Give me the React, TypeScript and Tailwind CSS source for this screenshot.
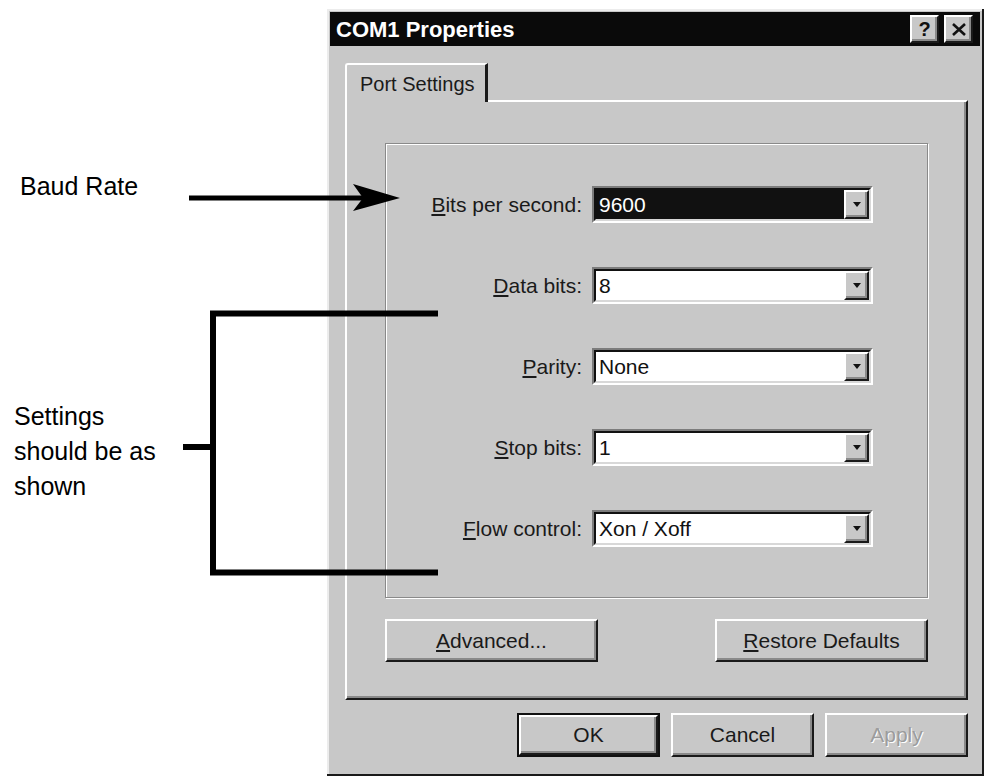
import React from 'react';

const raised =
  'border-2 border-t-white border-l-white border-r-[#1a1a1a] border-b-[#1a1a1a] shadow-[inset_-2px_-2px_0_#8a8a8a]';

function Mnemonic({ text, index = 0 }: { text: string; index?: number }) {
  return (
    <>
      {text.slice(0, index)}
      <span className="underline underline-offset-2">{text[index]}</span>
      {text.slice(index + 1)}
    </>
  );
}

function Combo({ label, value, selected }: { label: string; value: string; selected?: boolean }) {
  return (
    <div className="flex items-center">
      <div className="w-[206px] pr-[10px] text-right text-[21px] text-[#1a1a1a]">
        <Mnemonic text={label} />
      </div>
      <div className="h-[37px] w-[281px] border-2 border-t-[#7c7c7c] border-l-[#7c7c7c] border-r-white border-b-white">
        <div className="flex h-full border-2 border-t-[#111] border-l-[#111] border-r-[#d8d8d8] border-b-[#d8d8d8]">
          <div
            className={
              selected
                ? 'flex flex-1 items-center bg-[#111] pl-[3px] text-[21px] text-white'
                : 'flex flex-1 items-center bg-white pl-[3px] text-[21px] text-[#111]'
            }
          >
            {value}
          </div>
          <div className={`flex w-[25px] items-center justify-center bg-[#c8c8c8] ${raised}`}>
            <svg width="8" height="5" viewBox="0 0 8 5">
              <polygon points="0,0 8,0 4,5" fill="#111" />
            </svg>
          </div>
        </div>
      </div>
    </div>
  );
}

function Button({ children, isDefault, disabled }: { children: React.ReactNode; isDefault?: boolean; disabled?: boolean }) {
  return (
    <div className={isDefault ? 'h-[44px] w-[143px] border-2 border-[#111]' : 'h-[44px] w-[143px]'}>
      <div
        className={`flex h-full items-center justify-center bg-[#c8c8c8] text-[21px] ${raised} ${
          disabled ? 'text-[#9c9c9c] [text-shadow:1px_1px_0_#fff]' : 'text-[#1a1a1a]'
        }`}
      >
        {children}
      </div>
    </div>
  );
}

export default function App() {
  return (
    <div className="relative flex h-[778px] w-[987px] overflow-hidden bg-white font-['Liberation_Sans',Arial,sans-serif]">
      {/* annotations */}
      <div className="w-[327px] shrink-0 pt-[169px] text-[25px] leading-[35px] text-black">
        <div className="pl-[20px]">Baud Rate</div>
        <div className="mt-[195px] pl-[14px]">
          Settings
          <br />
          should be as
          <br />
          shown
        </div>
      </div>

      {/* dialog */}
      <div className="mt-[9px] flex h-[767px] w-[657px] flex-col bg-[#c8c8c8] p-[3px] pr-[4px] shadow-[inset_-2px_-2px_0_#1a1a1a,inset_2px_2px_0_#ececec]">
        <div className="flex h-[34px] items-center justify-between bg-[#0a0a0a] pl-[6px] pr-[7px]">
          <span className="text-[22px] font-bold text-white">COM1 Properties</span>
          <div className="flex gap-[5px]">
            <div className={`flex h-[28px] w-[29px] items-center justify-center bg-[#c8c8c8] text-[20px] font-bold text-[#111] ${raised}`}>
              ?
            </div>
            <div className={`flex h-[28px] w-[29px] items-center justify-center bg-[#c8c8c8] ${raised}`}>
              <svg width="14" height="13" viewBox="0 0 14 13">
                <path d="M1 1 L13 12 M13 1 L1 12" stroke="#111" strokeWidth="2.6" />
              </svg>
            </div>
          </div>
        </div>

        <div className="ml-[15px] mr-[12px] mt-[17px] flex flex-col">
          {/* tab */}
          <div className="relative z-10 -mb-[2px] flex h-[39px] w-[143px] items-start rounded-tl-[3px] border-l-2 border-t-2 border-r-[3px] border-l-white border-t-white border-r-[#1a1a1a] bg-[#c8c8c8] pl-[13px] pt-[4px] text-[20px] text-[#1a1a1a]">
            Port Settings
          </div>
          {/* panel */}
          <div className="flex h-[600px] flex-col border-2 border-t-white border-l-white border-r-[#1a1a1a] border-b-[#1a1a1a] px-[38px] pt-[41px] shadow-[inset_-2px_-2px_0_#8a8a8a]">
            <div className="flex h-[455px] flex-col gap-[44px] border border-[#8a8a8a] pt-[42px] shadow-[1px_1px_0_#fff,inset_1px_1px_0_#fff]">
              <Combo label="Bits per second:" value="9600" selected />
              <Combo label="Data bits:" value="8" />
              <Combo label="Parity:" value="None" />
              <Combo label="Stop bits:" value="1" />
              <Combo label="Flow control:" value="Xon / Xoff" />
            </div>
            <div className="mt-[21px] flex justify-between">
              <div className="h-[43px] w-[213px]">
                <div className={`flex h-full items-center justify-center bg-[#c8c8c8] text-[21px] text-[#1a1a1a] ${raised}`}>
                  <Mnemonic text="Advanced..." />
                </div>
              </div>
              <div className="h-[43px] w-[213px]">
                <div className={`flex h-full items-center justify-center bg-[#c8c8c8] text-[21px] text-[#1a1a1a] ${raised}`}>
                  <Mnemonic text="Restore Defaults" />
                </div>
              </div>
            </div>
          </div>

          <div className="mt-[13px] flex justify-end gap-[11px]">
            <Button isDefault>OK</Button>
            <Button>Cancel</Button>
            <Button disabled>Apply</Button>
          </div>
        </div>
      </div>

      {/* callout lines */}
      <svg className="pointer-events-none absolute inset-0" width="987" height="778" viewBox="0 0 987 778">
        <line x1="189" y1="198" x2="366" y2="198" stroke="#000" strokeWidth="5" />
        <polygon points="400,198 353,184 363,198 353,211" fill="#000" />
        <polyline points="438,313.5 213,313.5 213,572.5 438,572.5" fill="none" stroke="#000" strokeWidth="6" />
        <line x1="183" y1="447" x2="213" y2="447" stroke="#000" strokeWidth="6" />
      </svg>
    </div>
  );
}
